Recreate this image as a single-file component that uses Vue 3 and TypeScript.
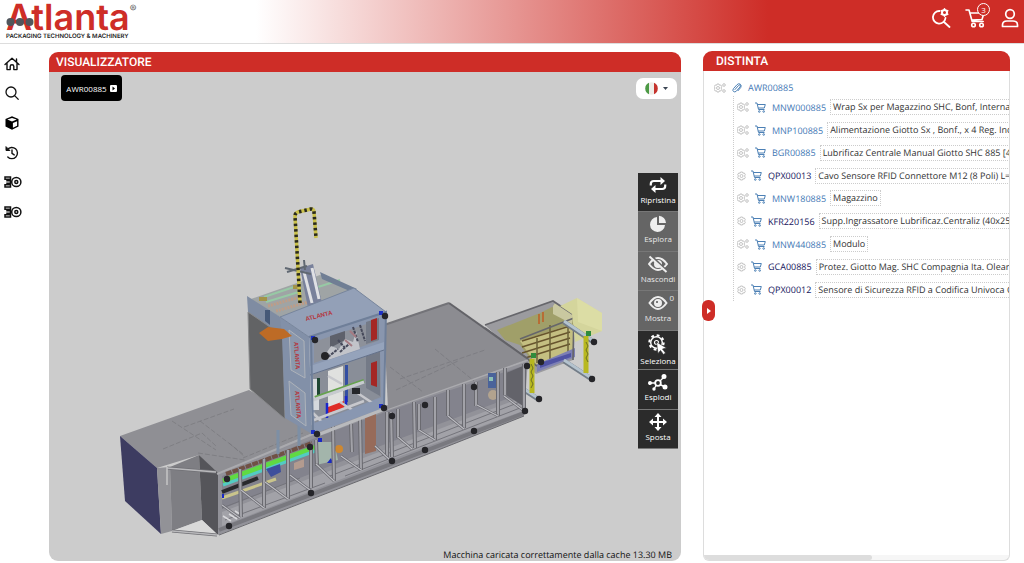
<script setup lang="ts">
import { ref } from 'vue'

interface Part {
  code: string
  text: string
  group: boolean
}

interface Tool {
  id: string
  label: string
  dim: boolean
  badge?: string
}

type Line = [number, number, number, number]

const parts: Part[] = [
  { code: 'MNW000885', text: 'Wrap Sx per Magazzino SHC, Bonf, Interna, Mod', group: true },
  { code: 'MNP100885', text: 'Alimentazione Giotto Sx , Bonf., x 4 Reg. Incart', group: true },
  { code: 'BGR00885', text: 'Lubrificaz Centrale Manual Giotto SHC 885 [4 Di]', group: true },
  { code: 'QPX00013', text: 'Cavo Sensore RFID Connettore M12 (8 Poli) L=10', group: false },
  { code: 'MNW180885', text: 'Magazzino', group: true },
  { code: 'KFR220156', text: 'Supp.Ingrassatore Lubrificaz.Centraliz (40x250)', group: false },
  { code: 'MNW440885', text: 'Modulo', group: true },
  { code: 'GCA00885', text: 'Protez. Giotto Mag. SHC Compagnia Ita. Olearia', group: false },
  { code: 'QPX00012', text: 'Sensore di Sicurezza RFID a Codifica Univoca Co', group: false },
]

const tools: Tool[] = [
  { id: 'reset', label: 'Ripristina', dim: false },
  { id: 'explore', label: 'Esplora', dim: true },
  { id: 'hide', label: 'Nascondi', dim: true },
  { id: 'show', label: 'Mostra', dim: true, badge: '0' },
  { id: 'select', label: 'Seleziona', dim: false },
  { id: 'explode', label: 'Esplodi', dim: false },
  { id: 'move', label: 'Sposta', dim: false },
]

const navItems = [
  { id: 'home', label: 'Home' },
  { id: 'search', label: 'Cerca' },
  { id: 'box', label: 'Modello' },
  { id: 'history', label: 'Cronologia' },
  { id: 'piston', label: 'Ricambi' },
  { id: 'piston', label: 'Componenti' },
]

const knobs = [
  [227, 479], [229, 526], [311, 493], [310, 447], [317, 434], [384, 408], [392, 416], [392, 461],
  [425, 405], [425, 450], [474, 387], [474, 431], [527, 366], [525, 411], [541, 362], [539, 399],
  [594, 342], [592, 379], [385, 316], [315, 340],
]

const posts: Line[] = [
  [240, 469, 241, 517], [264, 459, 264, 508], [288, 450, 288, 499], [311, 447, 311, 488],
  [316, 440, 317, 466], [333, 426, 334, 481], [351, 424, 352, 452], [360, 419, 361, 470],
  [387, 412, 387, 457], [391, 412, 392, 457], [398, 409, 398, 438], [414, 402, 415, 448],
  [419, 404, 419, 430], [435, 397, 435, 440], [448, 390, 448, 416], [464, 384, 464, 428],
  [476, 382, 476, 406], [498, 372, 498, 416], [505, 368, 505, 395], [524, 364, 524, 412],
]

const braces: Line[] = [
  [241, 490, 264, 508], [265, 482, 288, 499], [290, 475, 310, 490], [316, 464, 334, 481],
  [341, 456, 361, 470], [375, 446, 390, 460], [398, 437, 412, 449], [419, 430, 435, 440],
  [448, 416, 464, 429], [477, 405, 498, 416], [504, 396, 524, 411], [222, 505, 240, 518],
]

const slats = [338, 344, 350, 356]
const current = ref('AWR00885')
</script>

<template>
  <div class="page">
    <header class="top">
      <div class="logo" aria-label="Atlanta">
        <div class="brand">
          <span class="name">Atlanta</span><span class="reg">®</span>
          <svg class="dots" width="28" height="10" viewBox="0 0 28 10" aria-hidden="true">
            <circle cx="4.500" cy="5" r="4" /><circle cx="14" cy="5" r="4" /><circle cx="23.500" cy="5" r="4" />
          </svg>
        </div>
        <div class="motto">PACKAGING TECHNOLOGY &amp; MACHINERY</div>
      </div>
      <div class="actions">
        <button type="button" aria-label="Ricerca avanzata">
          <svg width="20" height="20" viewBox="0 0 20 20" fill="none" stroke="#fff" stroke-width="1.800" stroke-linecap="round">
            <path d="M8.500 3A6.300 6.300 0 1 0 14.500 10M13 14l5.500 5" />
            <circle cx="13.500" cy="4.500" r="2.500" stroke-width="2" />
            <path d="M13.500.8v.7M13.500 7.500v.7M10.300 2.700l.6.300M16.100 6l.6.300M10.300 6.300l.6-.3M16.100 3l.6-.3" stroke-width="1.600" />
          </svg>
        </button>
        <button type="button" aria-label="Carrello" class="cart-top">
          <svg width="22" height="20" viewBox="0 0 22 20" fill="none" stroke="#fff" stroke-width="1.600" stroke-linecap="round" stroke-linejoin="round">
            <path d="M1 2h3l3.200 11.500h11M5 5h14l-2 6.500-10.300.6" />
            <circle cx="8.500" cy="17" r="1.800" /><circle cx="16.500" cy="17" r="1.800" />
          </svg>
          <span class="count">3</span>
        </button>
        <button type="button" aria-label="Profilo">
          <svg width="18" height="20" viewBox="0 0 18 20" fill="none" stroke="#fff" stroke-width="1.700">
            <circle cx="9" cy="6" r="4.300" />
            <path d="M1.500 18.500v-1.500c0-2.500 2-4 4.500-4h6c2.500 0 4.500 1.500 4.500 4v1.500z" stroke-linejoin="round" />
          </svg>
        </button>
      </div>
    </header>

    <main class="body">
      <nav class="side">
        <button v-for="(n, i) in navItems" :key="i" type="button" :aria-label="n.label">
          <svg v-if="n.id === 'home'" width="16" height="14" viewBox="0 0 16 14" fill="none" stroke="#111" stroke-width="1.400" stroke-linejoin="round" stroke-linecap="round">
            <path d="M1 7.500 8 1.200l7 6.300M3 6v6.600h3.200V9.500q0-1.700 1.800-1.700t1.800 1.700v3.100H13V6M12.500 2v3" />
          </svg>
          <svg v-else-if="n.id === 'search'" width="16" height="14" viewBox="0 0 16 14" fill="none" stroke="#111" stroke-width="1.300">
            <circle cx="7" cy="6" r="5" /><path d="m10.600 9.600 4 4" />
          </svg>
          <svg v-else-if="n.id === 'box'" width="16" height="14" viewBox="0 0 16 14">
            <path d="M8 .3 14.500 3v7.500L8 13.800 1.500 10.500V3z" />
            <path d="M3.300 3.500 8 1.900l4.700 1.600L8 5.400zM8.900 7l4.200-1.800v4.500l-4.200 2.100z" fill="#fff" />
          </svg>
          <svg v-else-if="n.id === 'history'" width="16" height="14" viewBox="0 0 16 14" fill="none" stroke="#111" stroke-width="1.400" stroke-linecap="round">
            <path d="M3.500 3.500a5.600 5.600 0 1 1 .3 7.400M8 4v3.300l2.200 1.600" />
            <path d="M2 1v3.500h3.500z" fill="#111" stroke-width="1" />
          </svg>
          <svg v-else width="18" height="12" viewBox="0 0 18 12" fill="none" stroke="#111" stroke-width="1.500">
            <path d="M1 1h5.500v2.300H1zM1 8.700h5.500V11H1zM3 3.300v1.500h3.500M3 8.700V7.200h3.500M6.500 3.300v5.400" />
            <circle cx="12.300" cy="6" r="4.600" /><circle cx="12.300" cy="6" r="1.500" />
          </svg>
        </button>
      </nav>

      <section class="panel viewer">
        <h2>VISUALIZZATORE</h2>
        <div class="canvas">
          <svg class="machine" viewBox="49 72 632 489" preserveAspectRatio="xMidYMid meet" role="img" aria-label="Macchina">
            <!-- infeed on the far right -->
            <path d="M485 325 553 301 574 314 573 360 536 374z" fill="#9b9b9f" />
            <path d="M497 330 540 313 552 307 575 317 573 352 536 366 520 345 505 340z" fill="#a09f69" />
            <path d="M553 306 555 303 573 315 572 324 553 314z" fill="#c9c8a0" />
            <path d="M520 341 573 324V354L537 366z" fill="#c4bf81" />
            <path v-for="y in slats" :key="y" :d="`M522 ${y + 3}L570 ${y - 12}`" stroke="#67542d" stroke-width="1.500" />
            <path d="M550 325v34M537 338v25M568 322v35" stroke="#6b6238" stroke-width="1.500" />
            <path d="M537 364 575 348V357L537 372z" fill="#7d80b4" />
            <path d="M540 363 571 353 571 357 540 368z" fill="#4f53a4" />
            <path d="M485 325 553 301 574 315 573 360M485 328l52 38M574 318l-54 21" fill="none" stroke="#66666b" stroke-width="1.700" />
            <path d="M560 306 577 298 602 313V331L575 342 572 314z" fill="#d4d59c" />
            <path d="M577 298 602 313 602 331 578 322z" fill="#dfdfa9" opacity=".7" />
            <path d="M539 314v10M543 312v10" stroke="#b76d35" stroke-width="2" />
            <g fill="none" stroke="#737d88" stroke-width="5"><path d="M564 322 592 341M564 361 590 378M524 390 538 399" /></g>
            <g fill="none" stroke="#b4c3ce" stroke-width="3"><path d="M564 321 592 340M564 360 590 377M524 389 538 398" /></g>
            <path d="M532 359v34M586 336v37" stroke="#b8b820" stroke-width="5" />
            <path d="m531 364 2 4-2 4 2 4-2 4 2 4-2 4M586 342l2 4-2 4 2 4-2 4 2 4" fill="none" stroke="#6d7025" />
            <path d="M531 353h5v5h-5zM586 331h5v5h-5z" fill="#2f8c3c" />

            <!-- long base -->
            <path d="M120 436 249 390 320 430 217 474 199 455 157 468z" fill="#8f8f94" />
            <path d="M120 436 157 468 161 534 125 501z" fill="#3d3c61" />
            <path d="M157 468 170 467 172 531 161 534z" fill="#929297" />
            <path d="M170 467 199 455 202 520 172 531z" fill="#7e7e83" />
            <path d="M199 455 218 473V535L202 520z" fill="#55555a" />
            <path d="M172 531 202 520 218 535z" fill="#d9d9d9" />
            <path d="M218 473 320 430 388 405 528 359 524 416 423 456 218 535z" fill="#929299" />
            <path d="M222 476 320 436 388 411 523 366V393L388 443 222 509z" fill="#83838d" />
            <path d="M222 512 523 397V411L390 460 222 526z" fill="#a2a2a8" />
            <path d="M222 508 300 478M225 520 325 483M330 476 520 402M345 476 520 408" stroke="#74747b" stroke-width="1" />
            <path d="M219 530 524 413" stroke="#79797f" stroke-width="4" />
            <path d="M219 535 423 456 524 416" fill="none" stroke="#68686d" stroke-width="1" />
            <path d="M217 474 320 431M388 409 528 360" stroke="#aaaaae" stroke-width="2" />
            <path d="M163 449 202 433 216 446M172 421 216 450M198 453 245 460M229 443l16 14M200 421l43 33M184 427l50-18M243 458l60-25" fill="none" stroke="#77777c" stroke-width="1" opacity=".7" stroke-dasharray="5 2" />
            <path d="M167 468 216 472M172 531 217 535" stroke="#707075" stroke-width="3" />
            <path d="M167 468 216 472M172 531 217 535" stroke="#b8b8bb" stroke-width="1.500" />
            <path d="M167 467V485" stroke="#c4c4c6" stroke-width="1.500" />

            <!-- conveyor inside the base -->
            <path d="M226 474 312 443" stroke="#705145" stroke-width="4" stroke-dasharray="6 1" />
            <path d="M223 481 322 445" stroke="#60da43" stroke-width="5" />
            <path d="M223 485 326 447" stroke="#53cbc3" stroke-width="3" />
            <path d="M222 492 258 478" stroke="#29292c" stroke-width="4" />
            <path d="M222 498 276 479" stroke="#c9c48c" stroke-width="3" />
            <path d="m266 469 14-5 1 8-10 5z" fill="#3e4f9c" />
            <path d="m294 463 10-4v8l-10 3z" fill="#b39b8f" />
            <path d="M318 442h16l4 18-22 5z" fill="#a3b5ab" />
            <circle cx="339" cy="449" r="4" fill="#ce8831" />
            <path d="m327 463 4-5 2 5zM222 494h2v4h-2zM318 438h4v4h-4z" fill="#1928c4" />
            <path d="M223 516l8 5M229 514l8 5M235 511l8 5" stroke="#d9d9dc" stroke-width="1.500" />
            <path d="M278 430v24M299 421v25" stroke="#7d8fa5" stroke-width="3" />

            <!-- right module roof -->
            <path d="M384 325 449 303 528 359 388 409z" fill="#8c8c91" />
            <path d="M449 303 528 359" stroke="#636368" stroke-width="2" />
            <path d="M384 325 449 303" stroke="#737378" stroke-width="2" />
            <path d="M390 367 423 392M400 379 485 350M435 349 474 381M396 390 458 361" stroke="#77777d" stroke-width="1" opacity=".65" stroke-dasharray="5 2" />
            <path d="M488 373h9v15h-9z" fill="#4a639a" /><path d="M489 377h4v4h-4z" fill="#8cc0b5" />
            <circle cx="493" cy="395" r="5" fill="#b2a38e" />
            <path d="M506 373 523 366V406L506 395z" fill="#63636a" />
            <path d="m365 417 11-5v39l-11 3z" fill="#976b5a" />

            <g v-for="(p, i) in posts" :key="'p' + i">
              <line :x1="p[0]" :y1="p[1]" :x2="p[2]" :y2="p[3]" stroke="#6a6a70" stroke-width="4" />
              <line :x1="p[0]" :y1="p[1]" :x2="p[2]" :y2="p[3]" stroke="#a2a2a8" stroke-width="2" />
            </g>
            <g v-for="(b, i) in braces" :key="'b' + i">
              <line :x1="b[0]" :y1="b[1]" :x2="b[2]" :y2="b[3]" stroke="#66666c" stroke-width="2.500" />
              <line :x1="b[0]" :y1="b[1]" :x2="b[2]" :y2="b[3]" stroke="#bdbdc3" stroke-width="1.200" />
            </g>

            <!-- tower -->
            <path d="M248 300 320 275 356 289 282 318z" fill="#9fa4a5" />
            <path d="M264 297 300 285M266 302 302 291M318 287l22-7" stroke="#97c9a5" stroke-width="2" />
            <path d="M268 306 300 297M276 311 312 301" stroke="#bd9d88" stroke-width="3" stroke-dasharray="2 1" />
            <path d="M259 297h8v4h-8zM293 285h5v4h-5z" fill="#a39349" />
            <path d="M320 272 357 289 352 292 322 279z" fill="#707e94" />
            <path d="m300 268 13-4 9 39-14 5z" fill="#79819b" />
            <path d="m304 272 8 31M312 268l7 31" stroke="#dfe0e4" stroke-width="3" />
            <path d="M285 268 311 274M304 260l1 10M287 272l20-6" stroke="#606872" stroke-width="2" />
            <path d="M247 296 282 318 283 337 248 312z" fill="#7f8ca2" />
            <path d="M248 312 283 336 285 419 250 389z" fill="#626365" />
            <path d="M248 312 283 336 285 419 250 389z" fill="none" stroke="#88898b" stroke-width="1" />
            <path d="M265 310h5v15l-5-4z" fill="#465978" />
            <path d="M280 317 309 337 312 434 285 418 282 336z" fill="#8290a8" />
            <path d="M280 317 354 288 386 312 309 337z" fill="#93a0b7" />
            <path d="M280 317 354 288 386 312 309 337z" fill="none" stroke="#77859c" stroke-width="1" />
            <path d="M289 330 304 341 305 378 291 370zM289 381 305 393 306 426 291 415z" fill="#8b98ad" stroke="#aeb3ba" stroke-width="1" />
            <path d="M309 337 386 312 384 407 312 434z" fill="#8996ae" />
            <path d="M314 342 378 320V341L314 363z" fill="#8d919a" />
            <path d="M330 336 345 331V340L330 348z" fill="#5e616b" />
            <path d="m325 355 6-9 8 3 6-10 8 3 3-11 4 18-32 11z" fill="#c2c4ca" />
            <path d="m328 357 10-8M340 352l9-8M353 327l5 15M360 325l5 16M338 340l7 8" stroke="#46495a" stroke-width="2" stroke-dasharray="3 1" />
            <path d="m345 340 7 6M350 331l6 6" stroke="#a47b83" stroke-width="2" />
            <circle cx="325" cy="356" r="4" fill="#242427" />
            <path d="M366 322 379 318V340L366 344z" fill="#747a87" />
            <path d="M313 374 380 351 381 397 315 423z" fill="#898e98" />
            <path d="M328 371 343 366V402L328 408z" fill="#e0e1df" />
            <path d="M345 365h3v37h-3z" fill="#334fa2" />
            <path d="M313 379h6v31h-6z" fill="#d5d8dc" /><path d="M317 378h3v17h-3z" fill="#1e4532" />
            <path d="M315 398 364 381" stroke="#65a24d" stroke-width="4" />
            <path d="M313 400 364 382" stroke="#c7cacf" stroke-width="3" />
            <path d="M328 407 344 401V408L328 413z" fill="#df2d26" />
            <path d="M327 403v15M346 396v10" stroke="#1a27ca" stroke-width="2.500" />
            <path d="M314 420 364 401M340 402 360 415M313 413l12 12M328 376l14 8M356 392l18 12" stroke="#c7c8cd" stroke-width="2.500" />
            <path d="M352 388h8v6h-8z" fill="#25272b" />
            <path d="M366 356 380 351V396L366 388z" fill="#747a87" />
            <path d="m371 320 6-2v21l-6 2zM371 363l6-2v26l-6-2z" fill="#a42725" />
            <path d="M310 366 384 342V350L311 375z" fill="#95a3bb" /><path d="M310 375 384 350" stroke="#65728b" stroke-width="1" />
            <path d="M312 424 384 397V408L312 434z" fill="#8997b1" />
            <path d="M309 337 386 312 384 407M311 337l2 96" fill="none" stroke="#6f7f99" stroke-width="2" />
            <path d="M320 434 382 410" stroke="#b9babd" stroke-width="3" />
            <path d="M311 336h4v4h-4zM379 311h4v4h-4zM311 430h4v4h-4zM379 404h4v4h-4z" fill="#1f32c5" />
            <path d="m259 333 9-6 16 2 8 7-10 3-14 2z" fill="#bd6b26" />
            <g class="mark">
              <text transform="translate(306 321) rotate(-14)">ATLANTA</text>
              <text transform="translate(294 342) rotate(86)">ATLANTA</text>
              <text transform="translate(295 391) rotate(86)">ATLANTA</text>
            </g>
            <path d="M300 303 295 216Q295 213 298 212L311 209Q314 209 314 212L316 238" fill="none" stroke="#c9c04a" stroke-width="3.500" />
            <path d="M300 303 295 216Q295 213 298 212L311 209Q314 209 314 212L316 238" fill="none" stroke="#29291f" stroke-width="3.500" stroke-dasharray="2.500 3" />

            <circle v-for="(k, i) in knobs" :key="'k' + i" :cx="k[0]" :cy="k[1]" r="3.200" fill="#252529" />
          </svg>

          <button type="button" class="crumb">
            {{ current }}
            <svg width="7" height="7" viewBox="0 0 7 7"><rect width="7" height="7" rx="1" fill="#fff" /><path d="m2.500 1.500 2.500 2-2.500 2z" /></svg>
          </button>

          <button type="button" class="lang" aria-label="Italiano">
            <svg width="13" height="13" viewBox="0 0 13 13">
              <circle cx="6.500" cy="6.500" r="6.200" fill="#efeee9" />
              <path d="M4 .8a6.200 6.200 0 0 0 0 11.400z" fill="#4c9a45" />
              <path d="M9 .8a6.200 6.200 0 0 1 0 11.400z" fill="#c5332d" />
            </svg>
            <svg width="5" height="3" viewBox="0 0 5 3"><path d="M0 0h5L2.500 3z" fill="#3b4654" /></svg>
          </button>

          <div class="tools">
            <button v-for="t in tools" :key="t.id" type="button" :class="{ dim: t.dim }">
              <svg v-if="t.id === 'reset'" width="18" height="18" viewBox="0 0 18 18" fill="none" stroke="#fff" stroke-width="2.200">
                <path d="M1.800 9.500V8q0-3 3-3h7.500M16.200 8.500V10q0 3-3 3H5.700" />
                <path d="M11.500 1 16 5l-4.500 4zM6.500 9 2 13l4.500 4z" fill="#fff" stroke="none" />
              </svg>
              <svg v-else-if="t.id === 'explore'" width="18" height="18" viewBox="0 0 18 18" fill="#eee">
                <path d="M8 2v8h8A7.500 7.500 0 1 1 8 2z" /><path d="M10 .8A7.500 7.500 0 0 1 17 8h-7z" />
              </svg>
              <svg v-else-if="t.id === 'hide'" width="20" height="18" viewBox="0 0 20 18" fill="none" stroke="#eee" stroke-width="2">
                <path d="M1 9q9-12 18 0-9 12-18 0z" /><circle cx="10" cy="9" r="3" fill="#eee" />
                <path d="M3 .5 19 16" stroke="#656565" stroke-width="2" /><path d="M1.500 1.500 18.500 17" />
              </svg>
              <svg v-else-if="t.id === 'show'" width="20" height="18" viewBox="0 0 20 18" fill="none" stroke="#eee" stroke-width="2">
                <path d="M1.500 9q8.500-12 17 0-8.500 12-17 0z" /><circle cx="10" cy="9" r="3" fill="#eee" /><circle cx="9" cy="8" r="1" fill="#555" stroke="none" />
              </svg>
              <svg v-else-if="t.id === 'select'" width="20" height="21" viewBox="0 0 20 21" fill="none" stroke="#fff">
                <circle cx="8.500" cy="8.500" r="5.800" stroke-width="1.400" />
                <circle cx="8.500" cy="8.500" r="7.200" stroke-width="2" stroke-dasharray="2.800 2.850" />
                <circle cx="8.500" cy="8.500" r="2" stroke-width="1.200" />
                <path d="m8.500 8 10 6-4 1 3 4-2 1.500-3-4-2.500 3z" fill="#fff" stroke="#2b2b2b" stroke-width=".6" />
              </svg>
              <svg v-else-if="t.id === 'explode'" width="20" height="18" viewBox="0 0 20 18" fill="#fff" stroke="#fff" stroke-width="1.400">
                <path d="M2 10h6M10 10l6-6M11 11l6 3M9 11l-3 5" />
                <circle cx="10" cy="10" r="2.800" fill="#2b2b2b" stroke-width="1.800" />
                <circle cx="2" cy="10" r="1.300" /><circle cx="16" cy="3.500" r="1.800" /><circle cx="17" cy="14" r="1.800" /><circle cx="6" cy="16" r="1" />
              </svg>
              <svg v-else width="18" height="18" viewBox="0 0 18 18" fill="#fff">
                <path d="M9 0 5.500 4H8v4H4V5.500L0 9l4 3.500V10h4v4H5.500L9 18l3.500-4H10v-4h4v2.500L18 9l-4-3.500V8h-4V4h2.500z" />
              </svg>
              <span>{{ t.label }}</span>
              <sup v-if="t.badge">{{ t.badge }}</sup>
            </button>
          </div>

          <p class="status">Macchina caricata correttamente dalla cache 13.30 MB</p>
        </div>
      </section>

      <div class="gutter"></div>

      <section class="panel bom">
        <h2>DISTINTA</h2>
        <div class="tree">
          <div class="root">
            <svg class="gears" width="12" height="10" viewBox="0 0 12 10"><use href="#gears" /></svg>
            <svg width="10" height="10" viewBox="0 0 10 10" fill="none" stroke="#4c80b5" stroke-linecap="round">
              <path d="m3 6.500 3.500-4q1-1 1.700-.3t-.2 1.800L4.300 8.200Q2.800 9.500 1.500 8.500T1.400 5.700L5 1.700Q6.700 0 8.300 1.200T8.700 4.600L6 7.700" />
            </svg>
            <a href="#root">AWR00885</a>
          </div>
          <ul>
            <li v-for="p in parts" :key="p.code" :class="{ leaf: !p.group }">
              <svg v-if="p.group" class="gears" width="12" height="10" viewBox="0 0 12 10"><use href="#gears" /></svg>
              <svg v-else class="gears" width="9" height="10" viewBox="0 0 9 10"><use href="#gear" /></svg>
              <button type="button" :aria-label="'Aggiungi ' + p.code">
                <svg width="11" height="11" viewBox="0 0 11 11" fill="none" stroke="#4c80b5" stroke-linejoin="round">
                  <path d="M0 1h2l1.500 6.500H9.500M2.300 2.500h8L9.300 6H3.200" /><circle cx="4.300" cy="9.500" r=".8" /><circle cx="8.700" cy="9.500" r=".8" />
                </svg>
              </button>
              <a :href="'#' + p.code">{{ p.code }}</a>
              <span class="desc">{{ p.text }}</span>
            </li>
          </ul>
        </div>
        <div class="scroll"><div class="thumb"></div></div>
        <button type="button" class="toggle" aria-label="Riduci pannello">
          <svg width="4" height="6" viewBox="0 0 4 6"><path d="m0 0 4 3-4 3z" fill="#fff" /></svg>
        </button>
      </section>
    </main>

    <svg class="defs" width="0" height="0" aria-hidden="true">
      <defs>
        <g id="gear" fill="none" stroke="#b5b5b5">
          <circle cx="4.500" cy="5" r="1.500" stroke-width=".8" />
          <path d="M3.500 1h2l.4 1.200 1.400-.2 1 1.700-.8 1.300.8 1.300-1 1.700-1.400-.2L5.500 9h-2l-.4-1.200-1.400.2-1-1.700.8-1.300-.8-1.300 1-1.700 1.400.2z" stroke-width=".8" />
        </g>
        <g id="gears" fill="none" stroke="#b5b5b5">
          <use href="#gear" transform="translate(-.5 0)" />
          <circle cx="10" cy="2" r="1.300" stroke-width=".8" /><circle cx="10" cy="8" r="1.300" stroke-width=".8" />
        </g>
      </defs>
    </svg>
  </div>
</template>

<style>
body {
  margin: 0;
  background: #fff;
}
</style>

<style scoped>
* {
  box-sizing: border-box;
}
.page {
  display: flex;
  flex-direction: column;
  height: 100vh;
  overflow: hidden;
  font-family: "Open Sans", "Noto Sans", sans-serif;
  font-size: 9px;
  color: #333;
  text-rendering: geometricPrecision;
}
button {
  padding: 0;
  border: 0;
  background: none;
  font: inherit;
  color: inherit;
  cursor: pointer;
}
svg {
  display: block;
  flex: none;
}
.defs {
  position: absolute;
}
.top {
  display: flex;
  justify-content: space-between;
  flex: none;
  height: 44px;
  border-bottom: 1px solid #ddd;
  background: linear-gradient(to right, #fff 25%, #ce2d27 75%);
}
.logo {
  padding-left: 6px;
  font-family: Inter, sans-serif;
}
.brand {
  position: relative;
  display: flex;
  height: 33px;
}
.name {
  font-size: 36px;
  line-height: 35px;
  font-weight: 600;
  color: #ce2d27;
}
.reg {
  font-size: 10px;
  line-height: 18px;
  color: #555;
}
.dots {
  position: absolute;
  left: 0;
  top: 17px;
  fill: #51565c;
}
.motto {
  font-size: 6px;
  line-height: 8px;
  font-weight: 600;
  color: #222;
}
.actions {
  display: flex;
  align-items: center;
  gap: 14px;
  height: 36px;
  padding-right: 5px;
}
.cart-top {
  position: relative;
}
.count {
  position: absolute;
  top: -5px;
  right: -3px;
  width: 13px;
  height: 13px;
  border: 1px solid #fff;
  border-radius: 50%;
  background: #ce2d27;
  color: #fff;
  font-size: 8px;
  line-height: 11px;
  text-align: center;
}
.body {
  display: flex;
  flex: 1;
  min-height: 0;
  padding: 8px 14px 2px 0;
}
.side {
  display: grid;
  grid-template-rows: repeat(6, 1fr);
  flex: none;
  width: 49px;
  height: 178px;
  margin-top: -3px;
  padding-left: 4px;
}
.side button {
  display: flex;
  align-items: center;
}
.panel {
  position: relative;
  display: flex;
  flex-direction: column;
  min-width: 0;
}
.panel h2 {
  flex: none;
  margin: 0;
  padding: 0 7px;
  border-radius: 9px 9px 0 0;
  background: #ce2d27;
  color: #fff;
  font: 500 12px/20px Roboto, sans-serif;
}
.viewer {
  flex: 632;
}
.canvas {
  position: relative;
  flex: 1;
  min-height: 0;
  border-radius: 0 0 9px 9px;
  background: #ccc;
}
.machine {
  width: 100%;
  height: 100%;
}
.mark text {
  font: 700 6px "Liberation Sans", sans-serif;
  fill: #b5343b;
}
.crumb {
  position: absolute;
  left: 12px;
  top: 3px;
  display: flex;
  align-items: center;
  justify-content: center;
  gap: 3px;
  width: 61px;
  height: 26px;
  border-radius: 4px;
  background: #000;
  color: #fff;
  font-size: 8px;
}
.lang {
  position: absolute;
  right: 4px;
  top: 6px;
  display: flex;
  align-items: center;
  justify-content: center;
  gap: 5px;
  width: 41px;
  height: 21px;
  border-radius: 7px;
  background: #fff;
}
.tools {
  position: absolute;
  right: 3px;
  top: 101px;
  display: grid;
  grid-auto-rows: 1fr;
  width: 40px;
  height: 276px;
}
.tools button {
  position: relative;
  display: flex;
  flex-direction: column;
  align-items: center;
  padding-top: 3px;
  border-bottom: 1px solid #777;
  background: #2b2b2b;
  color: #fff;
  font-size: 8px;
  line-height: 11px;
}
.tools button.dim {
  background: #656565;
  color: #e8e8e8;
}
.tools sup {
  position: absolute;
  right: 4px;
  top: 1px;
  font-size: 8px;
  line-height: 11px;
}
.status {
  position: absolute;
  right: 9px;
  bottom: 0;
  margin: 0;
  color: #111;
  line-height: 13px;
}
.gutter {
  flex: 22;
}
.bom {
  flex: 307;
  margin-top: -1px;
}
.bom h2 {
  padding-left: 13px;
}
.tree {
  flex: 1;
  min-height: 0;
  overflow: hidden;
  padding: 8px 0 0 10px;
  border: solid #ddd;
  border-width: 0 1px;
  white-space: nowrap;
}
.root {
  display: flex;
  align-items: center;
  gap: 6px;
  height: 17px;
}
ul {
  display: grid;
  grid-auto-rows: 1fr;
  height: 205px;
  margin: 0 0 0 19px;
  padding: 0;
  border-left: 1px dotted #ccc;
  list-style: none;
}
li {
  display: flex;
  align-items: center;
  padding-left: 3px;
}
li button {
  margin: 0 6px;
}
.leaf button {
  margin-left: 5px;
}
a {
  color: #3f78b5;
  text-decoration: none;
}
.leaf a {
  color: #14145c;
}
.desc {
  margin-left: 4px;
  padding: 0 2px;
  border: 1px dotted #ccc;
  line-height: 14px;
}
.scroll {
  flex: none;
  height: 6px;
  border: 1px solid #ddd;
  border-top: 0;
  border-radius: 0 0 6px 6px;
  background: #f6f6f6;
  overflow: hidden;
}
.thumb {
  width: 55%;
  height: 100%;
  border-radius: 0 3px 3px 0;
  background: #ddd;
}
.toggle {
  position: absolute;
  left: -1px;
  top: 249px;
  display: flex;
  align-items: center;
  justify-content: center;
  width: 13px;
  height: 21px;
  border-radius: 6px;
  background: #ce2d27;
}
</style>
